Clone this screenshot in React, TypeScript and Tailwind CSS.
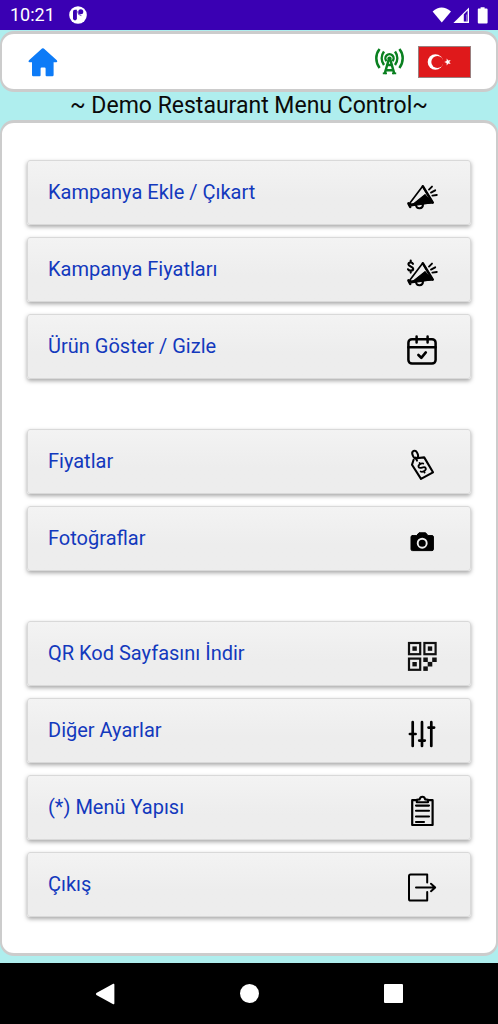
import React from "react";

function Icon({ children }: { children: React.ReactNode }) {
  return (
    <svg
      viewBox="0 0 36 36"
      className="mt-2 size-9 shrink-0"
      fill="none"
      stroke="#000"
      strokeWidth="2"
      strokeLinecap="round"
      strokeLinejoin="round"
      aria-hidden="true"
    >
      {children}
    </svg>
  );
}

const Megaphone = () => (
  <>
    <path d="M18.6 8.2 L28.6 24.6 L4.8 26.4 Z" strokeWidth="1.7" />
    <path d="M21 16.6 L28.6 24.8 L6.8 28 Z" fill="#000" strokeWidth="1.1" />
    <path d="M18.8 8.2 L28.8 24.6" strokeWidth="2.4" />
    <path d="M4.4 25.4 L6.2 29" strokeWidth="2.5" />
    <path d="M12 27.4 C12.6 31.2 18.8 31.2 19 26.6" strokeWidth="2" />
    <path d="M25 11.6 L28 8.6 M27 14.6 L31.2 12.3 M28.4 17.6 L32.8 17" strokeWidth="1.9" />
  </>
);

const Icons = {
  megaphone: (
    <Icon>
      <Megaphone />
    </Icon>
  ),
  megaphonePrice: (
    <Icon>
      <Megaphone />
      <path d="M9 8.8 C8.3 7 4.4 7 4.4 9.3 C4.4 11.8 9.2 11 9.2 13.7 C9.2 16.2 4.8 16.1 4 14.3 M6.7 5.6 V7.2 M6.7 15.9 V17.6" strokeWidth="2.1" />
    </Icon>
  ),
  calendar: (
    <Icon>
      <rect x="4.4" y="7.2" width="27.2" height="24.4" rx="3.6" strokeWidth="2.5" />
      <path d="M4.4 15.2 H31.6 M12.6 4.4 V10.4 M23.6 4.4 V10.4" strokeWidth="2.5" />
      <path d="M14.4 23 L17.3 25.8 L21.8 20.4" strokeWidth="2.6" />
    </Icon>
  ),
  tag: (
    <Icon>
      <path d="M12.4 11.2 L20.2 10.4 L29 25.3 L17 31.9 L8 17.8 L9.6 12.8" strokeWidth="2.1" />
      <ellipse cx="11.2" cy="7.6" rx="2.6" ry="4" transform="rotate(-24 11.2 7.6)" strokeWidth="2" />
      <path d="M11.6 10.6 L13 13.6" strokeWidth="2" />
      <path
        d="M3 -3 C1.8 -4.7 -2.8 -4.4 -2.7 -1.8 C-2.6 .6 3 -.6 3 2 C3 4.7 -2 4.6 -3 2.9 M0 -5.3 V-4 M0 4.1 V5.6"
        transform="translate(18 20.6) rotate(-28)"
        strokeWidth="1.8"
      />
    </Icon>
  ),
  camera: (
    <Icon>
      <path d="M8.4 11.6 H12.6 L15 8.8 H21.6 L24 11.6 H28 Q29.4 11.6 29.4 13 V25.2 Q29.4 26.6 28 26.6 H8.4 Q7 26.6 7 25.2 V13 Q7 11.6 8.4 11.6 Z" fill="#000" strokeWidth="1" />
      <circle cx="18.2" cy="19.2" r="4.5" stroke="#eee" strokeWidth="1.9" />
    </Icon>
  ),
  qr: (
    <Icon>
      <g stroke="#111" strokeLinejoin="miter" strokeWidth="2.2">
        <rect x="5" y="4" width="11.2" height="11.2" />
        <rect x="20.4" y="4" width="11.2" height="11.2" />
        <rect x="5" y="19.6" width="11.2" height="11.2" />
      </g>
      <g fill="#111" stroke="none">
        <rect x="8.4" y="7.4" width="4.4" height="4.4" />
        <rect x="23.8" y="7.4" width="4.4" height="4.4" />
        <rect x="8.4" y="23" width="4.4" height="4.4" />
        <rect x="19.3" y="18.5" width="4.5" height="4.5" />
        <rect x="28.2" y="18.5" width="4.5" height="4.5" />
        <rect x="23.7" y="22.9" width="4.6" height="4.6" />
        <rect x="19.3" y="27.4" width="4.5" height="4.5" />
      </g>
    </Icon>
  ),
  sliders: (
    <Icon>
      <path d="M8.7 6.2 V30 M18 6.2 V30 M27.3 6.2 V30" strokeWidth="2.7" />
      <path d="M5.9 18 H11.6 M15.2 24.6 H20.8 M24.5 11.6 H30.1" strokeWidth="2.7" />
    </Icon>
  ),
  clipboard: (
    <Icon>
      <path d="M12.6 7.2 H8.2 V32 H28.6 V7.2 H24" strokeWidth="2.2" />
      <path d="M12.8 9.2 V6.8 L15.6 6.4 Q16.2 3.8 18.4 3.8 Q20.6 3.8 21.2 6.4 L24 6.8 V9.2 Z" strokeWidth="2.1" />
      <path d="M12 12.6 H25 M12 17.7 H25 M12 23.5 H25 M12 29 H20" strokeWidth="2.1" />
    </Icon>
  ),
  exit: (
    <Icon>
      <path d="M23.2 12.6 V4.6 H6.6 Q5 4.6 5 6.2 V29 Q5 30.6 6.6 30.6 H23.2 V22" strokeWidth="2" />
      <path d="M12 17.4 H31 M27 13.7 L31.2 17.4 L27 21.2" strokeWidth="2" />
    </Icon>
  ),
};

const groups: { label: string; icon: React.ReactNode }[][] = [
  [
    { label: "Kampanya Ekle / Çıkart", icon: Icons.megaphone },
    { label: "Kampanya Fiyatları", icon: Icons.megaphonePrice },
    { label: "Ürün Göster / Gizle", icon: Icons.calendar },
  ],
  [
    { label: "Fiyatlar", icon: Icons.tag },
    { label: "Fotoğraflar", icon: Icons.camera },
  ],
  [
    { label: "QR Kod Sayfasını İndir", icon: Icons.qr },
    { label: "Diğer Ayarlar", icon: Icons.sliders },
    { label: "(*) Menü Yapısı", icon: Icons.clipboard },
    { label: "Çıkış", icon: Icons.exit },
  ],
];

function StatusBar() {
  return (
    <div className="flex h-[30px] items-center bg-[#3a00b3] px-[10px] text-white">
      <span className="text-lg leading-none">10:21</span>
      <svg viewBox="0 0 18 18" className="ml-[14px] size-[18px]" aria-hidden="true">
        <circle cx="9" cy="9" r="8.8" fill="#fff" />
        <path d="M4 5.6 Q4 3.8 5.8 3.8 H7.9 V12.6 Q7.9 14.4 6 14.4 Q4 14.4 4 12.6 Z" fill="#3a00b3" />
        <circle cx="11.8" cy="5.8" r="2.5" fill="#3a00b3" />
        <path d="M8.6 5.4 Q8.8 9.4 12.4 9.6" fill="none" stroke="#3a00b3" strokeWidth=".8" />
      </svg>
      <svg viewBox="0 0 56 17" className="ml-auto h-[17px] w-14" fill="#fff" aria-hidden="true">
        <path d="M.6 4.4 Q9.5 -3.4 19 4.4 L9.8 15.6 Z" />
        <path d="M37 .6 V16 H21.4 Z" />
        <path d="M31.8 7.2 L35.6 3.6 V14.6 H31.8 Z" fill="#3a00b3" />
        <path d="M34.2 7.4 H35 V14.6 H34.2 Z" opacity=".5" />
        <path d="M46.6 1.6 H48.6 V.2 H52.6 V1.6 H54.6 Q55.6 1.6 55.6 2.6 V15.4 Q55.6 16.4 54.6 16.4 H46.8 Q45.8 16.4 45.8 15.4 V2.6 Q45.8 1.6 46.6 1.6 Z" />
      </svg>
    </div>
  );
}

function Header() {
  return (
    <header className="mt-px flex h-[61px] items-center rounded-[14px] border-x-2 border-y-[3px] border-[#ccc] bg-white pl-[26px] pr-[25px]">
      <button type="button" aria-label="Ana sayfa">
        <svg viewBox="0 0 30 30" className="block size-[30px]" fill="#0d7bf7" aria-hidden="true">
          <path d="M14 1.6 Q14.9 .8 15.8 1.6 L28.8 13.2 Q30 15 28.2 15.2 H25.6 V28 Q25.6 29.2 24.4 29.2 H18.6 Q17.6 29.2 17.6 28.2 V21.4 Q17.6 20.4 16.6 20.4 H13.6 Q12.6 20.4 12.6 21.4 V28.2 Q12.6 29.2 11.6 29.2 H5.2 Q4 29.2 4 28 V15.2 H1.6 Q-.2 15 1 13.2 Z" />
        </svg>
      </button>
      <button type="button" aria-label="Yayın" className="ml-auto">
        <svg viewBox="0 0 30 27" className="block h-[27px] w-[30px]" fill="none" stroke="#0a8020" strokeWidth="2.5" aria-hidden="true">
          <path d="M4.6 1 C.2 6.4 .2 14 4.6 20 M24.4 1 C28.8 6.4 28.8 14 24.4 20" />
          <path d="M9 3.6 C6 7.6 6 13 9 17 M20 3.6 C23 7.6 23 13 20 17" />
          <path d="M11.6 13.2 A4.1 4.1 0 1 1 17.4 13.2" strokeWidth="2.4" />
          <circle cx="14.5" cy="10.8" r="2.2" fill="#0a8020" stroke="none" />
          <path d="M13.6 12 L9.6 26 M15.4 12 L19.4 26 M12.2 17 H16.8 M10.6 22.2 H18.4" />
          <path d="M7.8 25.4 H12 M17 25.4 H21.2" strokeWidth="1.8" />
        </svg>
      </button>
      <button type="button" aria-label="Türkçe" className="ml-[13px]">
        <svg viewBox="0 0 53 32" className="block h-8 w-[53px]" aria-hidden="true">
          <rect x=".5" y=".5" width="52" height="31" fill="#df191b" stroke="#9a7f7f" />
          <circle cx="17.4" cy="16" r="7.7" fill="#fff" />
          <circle cx="19.4" cy="16" r="6.1" fill="#df191b" />
          <path d="M26.2 16 L28.6 15.1 L28.7 12.6 L30.3 14.6 L32.7 13.9 L31.3 16 L32.7 18.1 L30.3 17.4 L28.7 19.4 L28.6 16.9 Z" fill="#fff" />
        </svg>
      </button>
    </header>
  );
}

export default function App() {
  return (
    <div className="flex min-h-screen flex-col bg-[#afeeee] font-['Roboto',sans-serif]">
      <StatusBar />
      <Header />
      <h1 className="text-center text-[23px] leading-7 text-[#0a0a0a]">~ Demo Restaurant Menu Control~</h1>
      <main className="mb-[7px] flex-1 rounded-[14px] border-x-2 border-y-[3px] border-[#ccc] bg-white px-[25px] pb-9 pt-[37px]">
        <nav className="flex flex-col gap-[50px]">
          {groups.map((group) => (
            <ul key={group[0].label} className="flex flex-col gap-3">
              {group.map(({ label, icon }) => (
                <li key={label}>
                  <button
                    type="button"
                    className="flex h-[65px] w-full items-center justify-between rounded-[3px] border border-[#d9d9d9] bg-linear-to-b from-[#f3f3f3] to-[#ededed] to-60% pb-0.5 pl-5 pr-[30px] text-left text-xl text-[#1339bd] shadow-[0_2px_4px_rgba(0,0,0,0.35)]"
                  >
                    <span>{label}</span>
                    {icon}
                  </button>
                </li>
              ))}
            </ul>
          ))}
        </nav>
      </main>
      <div className="grid h-[61px] grid-cols-[144px_144px_144px] items-center justify-center bg-black">
        <button type="button" aria-label="Geri" className="justify-self-center">
          <svg viewBox="0 0 20 22" className="block h-[22px] w-5" fill="#fff" aria-hidden="true">
            <path d="M18.2 .8 Q19.4 .4 19.4 1.8 V20.2 Q19.4 21.6 18.2 21.2 L1.4 11.9 Q.4 11 1.4 10.1 Z" />
          </svg>
        </button>
        <button type="button" aria-label="Ana ekran" className="size-[19px] justify-self-center rounded-full bg-white" />
        <button type="button" aria-label="Son uygulamalar" className="size-[19px] justify-self-center rounded-[1px] bg-white" />
      </div>
    </div>
  );
}
